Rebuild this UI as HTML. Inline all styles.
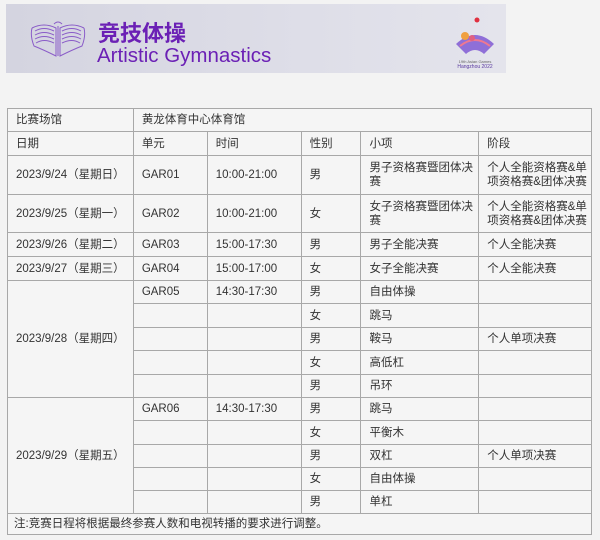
<!DOCTYPE html>
<html><head><meta charset="utf-8"><style>
body{margin:0;width:600px;height:540px;background:#f3f3f3;font-family:"Liberation Sans","Noto Sans CJK SC",sans-serif;position:relative;overflow:hidden}
.banner{position:absolute;left:6px;top:4px;width:500px;height:69px;background:linear-gradient(90deg,#d4d4e0,#dedee8 60%,#e4e4ec)}
.t1{position:absolute;left:92px;top:15px;font-size:22px;font-weight:bold;color:#6b20b5;font-family:"Noto Sans CJK SC",sans-serif;line-height:26px}
.t2{position:absolute;left:91px;top:40px;font-size:20.5px;color:#6b20b5;line-height:24px}
table{position:absolute;left:7px;top:108px;border-collapse:collapse;width:585px;font-size:11.5px;color:#333;background:#f5f5f5}
td{border:1px solid #a8a8a8;padding:0 0 0 8px;vertical-align:middle;line-height:14px}
</style></head><body>
<div class="banner">
<svg style="position:absolute;left:24px;top:16px" width="56" height="40" viewBox="0 0 56 40">
<g fill="none" stroke="#8a5cc8" stroke-width="1">
<path d="M2 8 Q14 2 26 8 L26 36 Q14 30 4 26 Q0 16 2 8"/><path d="M5 11 Q14 6 24 11"/><path d="M5 15 Q14 10 24 15"/><path d="M5 19 Q14 14 24 19"/><path d="M6 23 Q14 18 24 23"/>
<path d="M54 8 Q42 2 30 8 L30 36 Q42 30 52 26 Q56 16 54 8"/><path d="M51 11 Q42 6 32 11"/><path d="M51 15 Q42 10 32 15"/><path d="M51 19 Q42 14 32 19"/><path d="M50 23 Q42 18 32 23"/>
<path d="M28 6 L28 36 M24 4 Q28 0 32 4"/></g></svg>
<div class="t1">竞技体操</div><div class="t2">Artistic Gymnastics</div>
<svg style="position:absolute;left:444px;top:10px" width="50" height="56" viewBox="0 0 50 56">
<circle cx="27" cy="6" r="2.5" fill="#e03040"/>
<path d="M6 30 Q25 12 44 30 L34 40 Q25 32 16 40Z" fill="#8f6fd8"/>
<path d="M10 32 Q25 20 40 32" stroke="#f07890" stroke-width="2" fill="none"/>
<circle cx="15" cy="22" r="4" fill="#f0a040"/><circle cx="22" cy="24" r="3" fill="#e06080"/>
<text x="25" y="49" font-size="4" text-anchor="middle" fill="#666">19th Asian Games</text>
<text x="25" y="54" font-size="5" text-anchor="middle" fill="#5a3aa0">Hangzhou 2022</text>
</svg>
</div>
<table>
<colgroup><col style="width:126px"><col style="width:74px"><col style="width:94px"><col style="width:60px"><col style="width:118px"><col style="width:113px"></colgroup>
<tr style="height:23px"><td>比赛场馆</td><td colspan="5">黄龙体育中心体育馆</td></tr>
<tr style="height:24px"><td>日期</td><td>单元</td><td>时间</td><td>性别</td><td>小项</td><td>阶段</td></tr>
<tr style="height:39px"><td>2023/9/24（星期日）</td><td>GAR01</td><td>10:00-21:00</td><td>男</td><td>男子资格赛暨团体决赛</td><td>个人全能资格赛&amp;单项资格赛&amp;团体决赛</td></tr>
<tr style="height:38px"><td>2023/9/25（星期一）</td><td>GAR02</td><td>10:00-21:00</td><td>女</td><td>女子资格赛暨团体决赛</td><td>个人全能资格赛&amp;单项资格赛&amp;团体决赛</td></tr>
<tr style="height:24px"><td>2023/9/26（星期二）</td><td>GAR03</td><td>15:00-17:30</td><td>男</td><td>男子全能决赛</td><td>个人全能决赛</td></tr>
<tr style="height:24px"><td>2023/9/27（星期三）</td><td>GAR04</td><td>15:00-17:00</td><td>女</td><td>女子全能决赛</td><td>个人全能决赛</td></tr>
<tr style="height:23px"><td rowspan="5">2023/9/28（星期四）</td><td>GAR05</td><td>14:30-17:30</td><td>男</td><td>自由体操</td><td></td></tr>
<tr style="height:24px"><td></td><td></td><td>女</td><td>跳马</td><td></td></tr>
<tr style="height:23px"><td></td><td></td><td>男</td><td>鞍马</td><td>个人单项决赛</td></tr>
<tr style="height:24px"><td></td><td></td><td>女</td><td>高低杠</td><td></td></tr>
<tr style="height:23px"><td></td><td></td><td>男</td><td>吊环</td><td></td></tr>
<tr style="height:23px"><td rowspan="5">2023/9/29（星期五）</td><td>GAR06</td><td>14:30-17:30</td><td>男</td><td>跳马</td><td></td></tr>
<tr style="height:24px"><td></td><td></td><td>女</td><td>平衡木</td><td></td></tr>
<tr style="height:23px"><td></td><td></td><td>男</td><td>双杠</td><td>个人单项决赛</td></tr>
<tr style="height:23px"><td></td><td></td><td>女</td><td>自由体操</td><td></td></tr>
<tr style="height:23px"><td></td><td></td><td>男</td><td>单杠</td><td></td></tr>
<tr style="height:21px"><td colspan="6" style="padding-left:6px">注:竞赛日程将根据最终参赛人数和电视转播的要求进行调整。</td></tr>
</table>
</body></html>
